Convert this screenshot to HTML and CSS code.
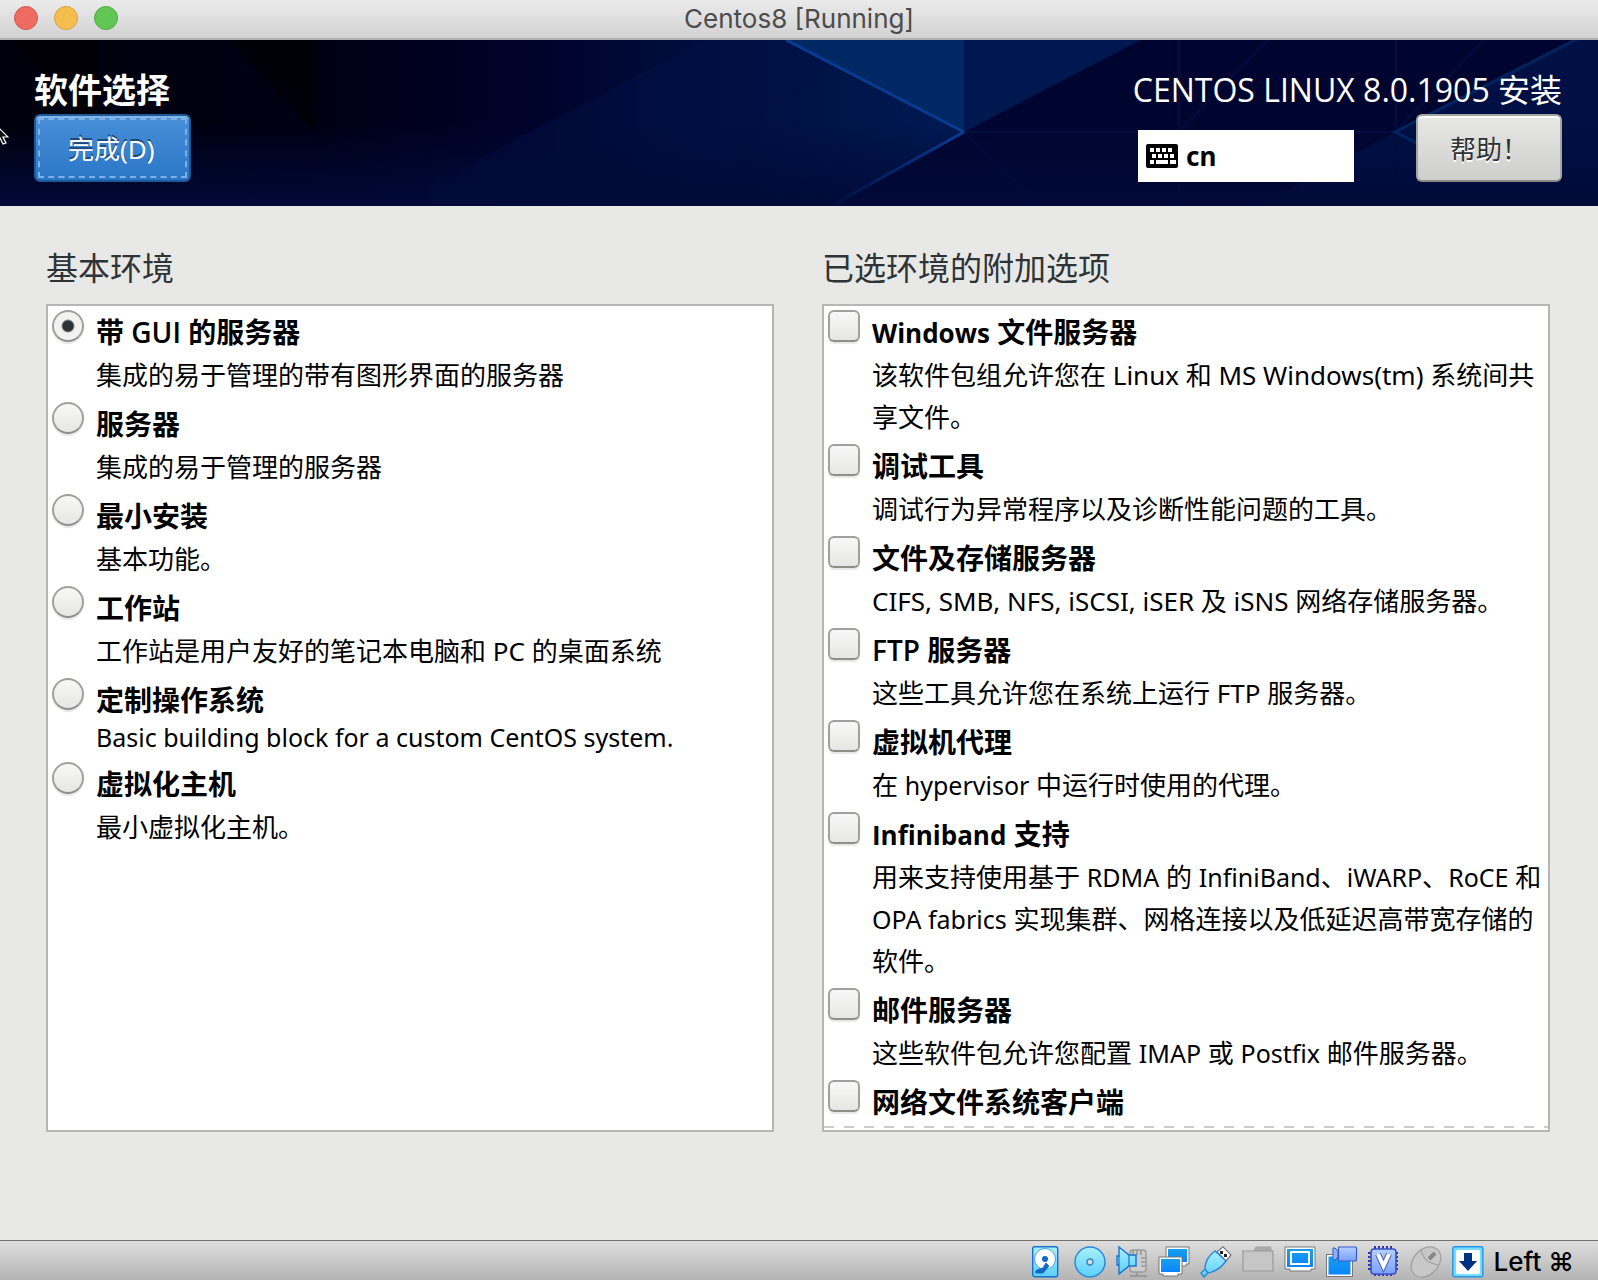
FILE: index.html
```html
<!DOCTYPE html>
<html lang="zh-CN">
  <head>
    <meta charset="UTF-8" />
    <meta name="viewport" content="width=device-width, initial-scale=1.0" />
    <title>Centos8 [Running]</title>
    <link rel="stylesheet" href="styles.css">
  </head>
  <body>
    <div class="titlebar">
      <div class="window-buttons">
        <button type="button" class="window-button close" aria-label="Close"></button>
        <button type="button" class="window-button minimize" aria-label="Minimize"></button>
        <button type="button" class="window-button zoom" aria-label="Zoom"></button>
      </div>
      <div class="window-title">Centos8 [Running]</div>
    </div>

    <header class="header">
      <svg class="header-bg" viewBox="0 0 1598 166" preserveAspectRatio="none" aria-hidden="true">
        <defs>
          <linearGradient id="base" x1="0" x2="1" y1="0" y2="0">
            <stop offset="0" stop-color="#00000c" />
            <stop offset="0.2" stop-color="#000014" />
            <stop offset="0.33" stop-color="#00022a" />
            <stop offset="0.42" stop-color="#000c3a" />
            <stop offset="0.6" stop-color="#001a54" />
          </linearGradient>
          <linearGradient id="floor" x1="0" x2="0" y1="0" y2="1">
            <stop offset="0.5" stop-color="#000a38" stop-opacity="0" />
            <stop offset="1" stop-color="#000a38" />
          </linearGradient>
          <linearGradient id="ray" x1="0" x2="1" y1="0" y2="0">
            <stop offset="0" stop-color="#0a3c94" stop-opacity="0" />
            <stop offset="1" stop-color="#0a3c94" />
          </linearGradient>
        </defs>
        <rect width="1598" height="166" fill="url(#base)" />
        <path d="M12 0H98V92Z" fill="#000006" />
        <path d="M230 0H315V92Z" fill="#000008" />
        <path d="M520 97L705 0H860L735 92V166H430V146Z" fill="#001248" fill-opacity="0.45" />
        <path d="M831 166L964 92L1140 0H1598V166Z" fill="#000530" />
        <path d="M786 0H964V92Z" fill="#002864" />
        <path d="M964 0H1140L964 92Z" fill="#001850" />
        <path d="M1395 92L1575 0H1598V166H1260Z" fill="#001044" />
        <path d="M1178 92L1268 0M964 92L1040 166M1395 92L1484 0M964 92H1395M1179 0V166M1396 0V166" stroke="#000d40" stroke-width="2" fill="none" />
        <rect width="1598" height="166" fill="url(#floor)" />
        <path d="M786 0L964 92" stroke="#083c90" stroke-width="3" />
        <path d="M820 172L964 92" stroke="url(#ray)" stroke-width="3" />
        <path d="M1575 0L1395 92L1460 125" stroke="#002460" stroke-width="3" fill="none" />
      </svg>
      <div class="header-left">
        <h1 class="page-title">软件选择</h1>
        <button type="button" class="button primary">完成(D)</button>
      </div>
      <div class="header-right">
        <div class="product">CENTOS LINUX 8.0.1905 安装</div>
        <div class="header-tools">
          <div class="keyboard-layout">
            <svg width="32" height="24" viewBox="0 0 32 24" aria-hidden="true">
              <rect width="32" height="24" rx="2" />
              <path d="M4 4h4v4H4zM10 4h4v4h-4zM16 4h4v4h-4zM22 4h4v4h-4zM6 10h4v4H6zM12 10h4v4h-4zM18 10h4v4h-4zM24 10h4v4h-4zM4 16h4v4H4zM10 16h12v4H10zM24 16h6v4h-6z" fill="#fff" />
            </svg>
            cn
          </div>
          <button type="button" class="button">帮助！</button>
        </div>
      </div>
      <svg class="cursor" width="9" height="18" viewBox="0 0 9 18" aria-hidden="true">
        <path d="M-4 -2L8 10H3L6 16L3 17L0 11L-4 14Z" fill="#111" stroke="#fff" stroke-width="1.2" />
      </svg>
    </header>

    <main class="main">
      <section class="panel">
        <h2 class="panel-title">基本环境</h2>
        <div class="list">
          <label class="item"><input type="radio" name="environment" checked>
            <span class="item-text"><strong>带 GUI 的服务器</strong><span>集成的易于管理的带有图形界面的服务器</span></span></label>
          <label class="item"><input type="radio" name="environment">
            <span class="item-text"><strong>服务器</strong><span>集成的易于管理的服务器</span></span></label>
          <label class="item"><input type="radio" name="environment">
            <span class="item-text"><strong>最小安装</strong><span>基本功能。</span></span></label>
          <label class="item"><input type="radio" name="environment">
            <span class="item-text"><strong>工作站</strong><span>工作站是用户友好的笔记本电脑和 PC 的桌面系统</span></span></label>
          <label class="item"><input type="radio" name="environment">
            <span class="item-text"><strong>定制操作系统</strong><span class="latin" lang="en">Basic building block for a custom CentOS system.</span></span></label>
          <label class="item"><input type="radio" name="environment">
            <span class="item-text"><strong>虚拟化主机</strong><span>最小虚拟化主机。</span></span></label>
        </div>
      </section>

      <section class="panel">
        <h2 class="panel-title">已选环境的附加选项</h2>
        <div class="list more">
          <label class="item"><input type="checkbox">
            <span class="item-text"><strong><span lang="en">Windows</span> 文件服务器</strong><span>该软件包组允许您在 Linux 和 MS Windows(tm) 系统间共享文件。</span></span></label>
          <label class="item"><input type="checkbox">
            <span class="item-text"><strong>调试工具</strong><span>调试行为异常程序以及诊断性能问题的工具。</span></span></label>
          <label class="item"><input type="checkbox">
            <span class="item-text"><strong>文件及存储服务器</strong><span>CIFS, SMB, NFS, iSCSI, iSER 及 iSNS 网络存储服务器。</span></span></label>
          <label class="item"><input type="checkbox">
            <span class="item-text"><strong>FTP 服务器</strong><span>这些工具允许您在系统上运行 FTP 服务器。</span></span></label>
          <label class="item"><input type="checkbox">
            <span class="item-text"><strong>虚拟机代理</strong><span>在 <span lang="en">hypervisor</span> 中运行时使用的代理。</span></span></label>
          <label class="item"><input type="checkbox">
            <span class="item-text"><strong><span lang="en">Infiniband</span> 支持</strong><span>用来支持使用基于 <span lang="en">RDMA</span> 的 <span lang="en">InfiniBand</span>、<span lang="en">iWARP</span>、<span lang="en">RoCE</span> 和<br><span lang="en">OPA fabrics</span> 实现集群、网格连接以及低延迟高带宽存储的<br>软件。</span></span></label>
          <label class="item"><input type="checkbox">
            <span class="item-text"><strong>邮件服务器</strong><span>这些软件包允许您配置 <span lang="en">IMAP</span> 或 <span lang="en">Postfix</span> 邮件服务器。</span></span></label>
          <label class="item"><input type="checkbox">
            <span class="item-text"><strong>网络文件系统客户端</strong></span></label>
        </div>
      </section>
    </main>

    <footer class="statusbar">
      <svg width="0" height="0" class="defs" aria-hidden="true">
        <defs>
          <linearGradient id="cyan" x1="0" x2="0" y1="0" y2="1">
            <stop offset="0" stop-color="#a8f0ff" />
            <stop offset="1" stop-color="#5ccfff" />
          </linearGradient>
          <linearGradient id="blue" x1="0" x2="0" y1="0" y2="1">
            <stop offset="0" stop-color="#18a0ea" />
            <stop offset="1" stop-color="#0a84ff" />
          </linearGradient>
          <linearGradient id="violet" x1="0" x2="0" y1="0" y2="1">
            <stop offset="0" stop-color="#b4d0ff" />
            <stop offset="1" stop-color="#7aa0ff" />
          </linearGradient>
        </defs>
      </svg>
      <!-- hard disk -->
      <svg class="icon" viewBox="0 0 32 32" aria-hidden="true">
        <rect x="0.7" y="0.7" width="25" height="30" rx="2" fill="url(#cyan)" stroke="#1a6fcc" stroke-width="1.4" />
        <circle cx="13" cy="13" r="10.5" fill="#fff" stroke="#4aa4e8" />
        <circle cx="13" cy="13" r="3" fill="#1468c8" />
        <path d="M14 17L17 20L11 27H4Q3 25 5 24L11 22Z" fill="#1468c8" stroke="#1468c8" />
      </svg>
      <!-- optical disc -->
      <svg class="icon" viewBox="0 0 32 32" aria-hidden="true">
        <circle cx="16" cy="16" r="15" fill="url(#cyan)" stroke="#2a86d8" stroke-width="1.4" />
        <circle cx="16" cy="16" r="3" fill="#ddd" stroke="#3a86c0" stroke-width="1.4" />
      </svg>
      <!-- audio -->
      <svg class="icon" viewBox="0 0 32 32" aria-hidden="true">
        <rect x="14" y="4" width="16" height="22" rx="3" fill="#ccc" stroke="#999" stroke-width="1.4" />
        <path d="M17 4V9M21 4V9M25 4V9M25 12H30M25 16H30M25 20H30" stroke="#999" stroke-width="1.6" />
        <path d="M21 26V29M14 30H31" stroke="#999" stroke-width="2" />
        <path d="M3 1L13 9H20V20H13L3 28V19H1V10H3Z" fill="url(#cyan)" stroke="#1a74cc" stroke-width="1.4" />
        <path d="M3 10V19M13 9V20" stroke="#1a74cc" stroke-width="1.2" />
      </svg>
      <!-- network -->
      <svg class="icon" viewBox="0 0 32 32" aria-hidden="true">
        <path d="M8 1H31V18H28V20H14V18H8Z" fill="#fff" stroke="#777" />
        <path d="M10 3H29V16H10Z" fill="url(#blue)" />
        <path d="M1 11H24V28H20V30H5V28H1Z" fill="#fff" stroke="#777" />
        <path d="M3 13H22V26H3Z" fill="url(#blue)" />
      </svg>
      <!-- usb -->
      <svg class="icon" viewBox="0 0 32 32" aria-hidden="true">
        <path d="M17 6L23 0.8L31 9L26 15Z" fill="#fff" stroke="#777" stroke-width="1.2" />
        <path d="M20 6.500H23M24 9.500H27" stroke="#222" stroke-width="3" />
        <path d="M15 5Q5 12 5 23L1 27L4 31L8 27Q19 25 26 15Z" fill="url(#cyan)" stroke="#2a86d8" stroke-width="1.4" />
        <path d="M5 23L8 27" stroke="#2a86d8" stroke-width="1.4" />
      </svg>
      <!-- shared folders -->
      <svg class="icon" viewBox="0 0 32 32" aria-hidden="true">
        <path d="M12 5L14 1H29V6" fill="#aaa" stroke="#a4a4a4" />
        <path d="M1 5H31V25H1Z" fill="#c6c6c6" stroke="#999" stroke-width="1.2" />
      </svg>
      <!-- display -->
      <svg class="icon" viewBox="0 0 32 32" aria-hidden="true">
        <path d="M1 1H31V23H27V25H6V23H1Z" fill="#fff" stroke="#777" />
        <path d="M3 3H29V21H3Z" fill="url(#blue)" />
        <rect x="7" y="6" width="18" height="12" fill="none" stroke="#fff" stroke-width="2" />
      </svg>
      <!-- recording -->
      <svg class="icon" viewBox="0 0 32 32" aria-hidden="true">
        <rect x="0.5" y="8.5" width="26" height="22" fill="#fff" stroke="#777" />
        <rect x="2.5" y="10.5" width="22" height="18" fill="url(#blue)" />
        <path d="M7 2H9L12 5V11L9 14H7Z" fill="#8ab0ff" stroke="#3a5ac8" />
        <rect x="12.5" y="1" width="18" height="14" rx="1" fill="url(#violet)" stroke="#3a5ac8" stroke-width="1.2" />
      </svg>
      <!-- cpu -->
      <svg class="icon" viewBox="0 0 32 32" aria-hidden="true">
        <path d="M6 1.5H26M6 28.5H26M1.5 6V26M28.5 6V26" stroke="#3038a8" stroke-width="3" stroke-dasharray="2 2" />
        <rect x="3" y="3" width="25" height="25" rx="3" fill="url(#violet)" stroke="#3c50c0" stroke-width="1.6" />
        <path d="M10 8L15.500 20L21 8" fill="none" stroke="#5060b0" stroke-width="6" />
        <path d="M10 8L15.500 20L21 8" fill="none" stroke="#fff" stroke-width="4" />
      </svg>
      <!-- mouse -->
      <svg class="icon" viewBox="0 0 32 32" aria-hidden="true">
        <ellipse cx="16" cy="16" rx="17" ry="12.500" transform="rotate(-47 16 16)" fill="#c8c8c8" stroke="#a0a0a0" stroke-width="1.200" />
        <path d="M11 3Q13 17 29 19" fill="none" stroke="#a0a0a0" stroke-width="1.200" />
        <path d="M19 13L25 7" stroke="#888" stroke-width="4" />
      </svg>
      <!-- keyboard capture -->
      <svg class="icon" viewBox="0 0 32 32" aria-hidden="true">
        <rect x="0.8" y="0.8" width="30" height="30" rx="2" fill="#78dcff" stroke="#2a98e4" stroke-width="1.500" />
        <rect x="4" y="4" width="24" height="24" rx="2" fill="#fff" />
        <path d="M12 7H20V15H25L16 25L7 15H12Z" fill="#003080" />
      </svg>
      <span class="host-key">Left ⌘</span>
    </footer>
  </body>
</html>
```
FILE: styles.css
```css
* {
  box-sizing: border-box;
}

body {
  display: flex;
  flex-direction: column;
  height: 100vh;
  margin: 0;
  overflow: hidden;
  background: #e8e8e6;
  color: #000;
  font-family: "Noto Sans", "Noto Sans CJK SC", sans-serif;
  font-size: 26px;
}

/* window title bar */
.titlebar {
  position: relative;
  flex: none;
  display: flex;
  align-items: center;
  justify-content: center;
  height: 40px;
  background: linear-gradient(#ebebeb, #d2d2d2);
  border-bottom: 2px solid #b1b1b1;
}

.window-buttons {
  position: absolute;
  left: 14px;
  top: 6px;
  display: flex;
  gap: 16px;
}

.window-button {
  width: 24px;
  height: 24px;
  padding: 0;
  border: 1px solid;
  border-radius: 50%;
}

.close {
  background: #ed6b60;
  border-color: #d8564c;
}

.minimize {
  background: #f5bf4f;
  border-color: #dba03c;
}

.zoom {
  background: #62c655;
  border-color: #4fae3f;
}

.window-title {
  color: #4c4c4c;
  font-family: Inter, sans-serif;
  font-size: 26px;
  line-height: 32px;
}

/* installer header */
.header {
  position: relative;
  flex: none;
  display: flex;
  justify-content: space-between;
  padding: 26px 36px 24px 34px;
  background: #00042e;
  overflow: hidden;
}

.header-bg {
  position: absolute;
  inset: 0;
  width: 100%;
  height: 100%;
}

.header-left,
.header-right {
  position: relative;
  display: flex;
  flex-direction: column;
}

.header-left {
  align-items: flex-start;
}

.page-title,
.product {
  margin: 0;
  color: #fff;
  line-height: 48px;
}

.page-title {
  font-size: 34px;
  font-weight: 700;
}

.product {
  font-family: "Open Sans", "Noto Sans CJK SC", sans-serif;
  font-size: 32px;
}

.header-tools {
  display: flex;
  justify-content: flex-end;
  align-items: flex-end;
  gap: 62px;
}

.keyboard-layout {
  display: flex;
  align-items: center;
  gap: 8px;
  width: 216px;
  height: 52px;
  padding: 0 8px;
  background: #fff;
  line-height: 32px;
  font-weight: 700;
}

.button {
  height: 68px;
  padding: 0 32px;
  border: 2px solid #a5a5a1;
  border-bottom-color: #8b8b87;
  border-radius: 6px;
  background: linear-gradient(#e8e8e6, #cececc);
  box-shadow: inset 0 2px #fff;
  color: #2e3436;
  font-family: inherit;
  font-size: 26px;
  text-shadow: 0 2px #fff;
}

.primary {
  position: relative;
  padding: 0 34px 0 32px;
  border-color: #1c5998;
  background: linear-gradient(#4a90d9, #2a76c6);
  box-shadow: inset 0 2px #82b4e6;
  color: #fff;
  text-shadow: 0 -2px #1f4a78;
}

.primary::after {
  content: "";
  position: absolute;
  inset: 2px;
  border: 2px dashed #7fb0e4;
}

.cursor {
  position: absolute;
  left: 0;
  top: 87px;
}

/* software lists */
.main {
  flex: 1;
  display: grid;
  grid-template-columns: 1fr 1fr;
  gap: 48px;
  min-height: 0;
  padding: 38px 48px 108px 46px;
}

.panel {
  display: flex;
  flex-direction: column;
  min-width: 0;
  min-height: 0;
}

.panel-title {
  margin: 0 0 12px;
  color: #2e3436;
  font-size: 32px;
  font-weight: 400;
  line-height: 48px;
}

.list {
  position: relative;
  flex: 1;
  min-height: 0;
  overflow: hidden;
  border: 2px solid #b6b6b3;
  background: #fff;
}

/* dashed edge: the list goes on below */
.more::after {
  content: "";
  position: absolute;
  left: 0;
  right: 0;
  bottom: 2px;
  height: 2px;
  background: repeating-linear-gradient(90deg, #ccc 0 10px, #fff 10px 20px);
}

.item {
  display: flex;
  align-items: flex-start;
  gap: 12px;
  padding: 4px 4px 2px;
}

.item input {
  appearance: none;
  flex: none;
  width: 32px;
  height: 32px;
  margin: 0;
  border: 2px solid #a0a09c;
  border-bottom-color: #8f8f8a;
  border-radius: 6px;
  background: linear-gradient(#f8f8f8, #e6e6e5);
  box-shadow: 0 2px 1px #e8e8e8;
}

.item input[type="radio"] {
  border-radius: 50%;
}

.item input[type="radio"]:checked {
  background: radial-gradient(circle, #2e3436 5px, #f2f2f1 7px);
}

.item-text {
  display: flex;
  flex-direction: column;
  min-width: 0;
  line-height: 42px;
}

.item-text strong {
  font-family: "Open Sans", "Noto Sans CJK SC", sans-serif;
  font-size: 28px;
  font-weight: 600;
  line-height: 44px;
}

.item-text [lang="en"] {
  font-size: 25px;
  line-height: 30px;
}

.item-text strong [lang="en"] {
  font-size: 26px;
  font-weight: 700;
}

.item-text .latin {
  padding-bottom: 4px;
}

/* virtual machine status bar */
.statusbar {
  flex: none;
  display: flex;
  align-items: center;
  justify-content: flex-end;
  gap: 10px;
  height: 40px;
  padding: 2px 24px 0 0;
  border-top: 1px solid #73736c;
  background: linear-gradient(#dedede, #b4b4b4);
}

.defs {
  position: absolute;
}

.icon {
  flex: none;
  width: 32px;
  height: 32px;
  overflow: visible;
}

.host-key {
  font-family: Inter, "DejaVu Sans", sans-serif;
  font-size: 26px;
  font-weight: 500;
  line-height: 32px;
}
```
